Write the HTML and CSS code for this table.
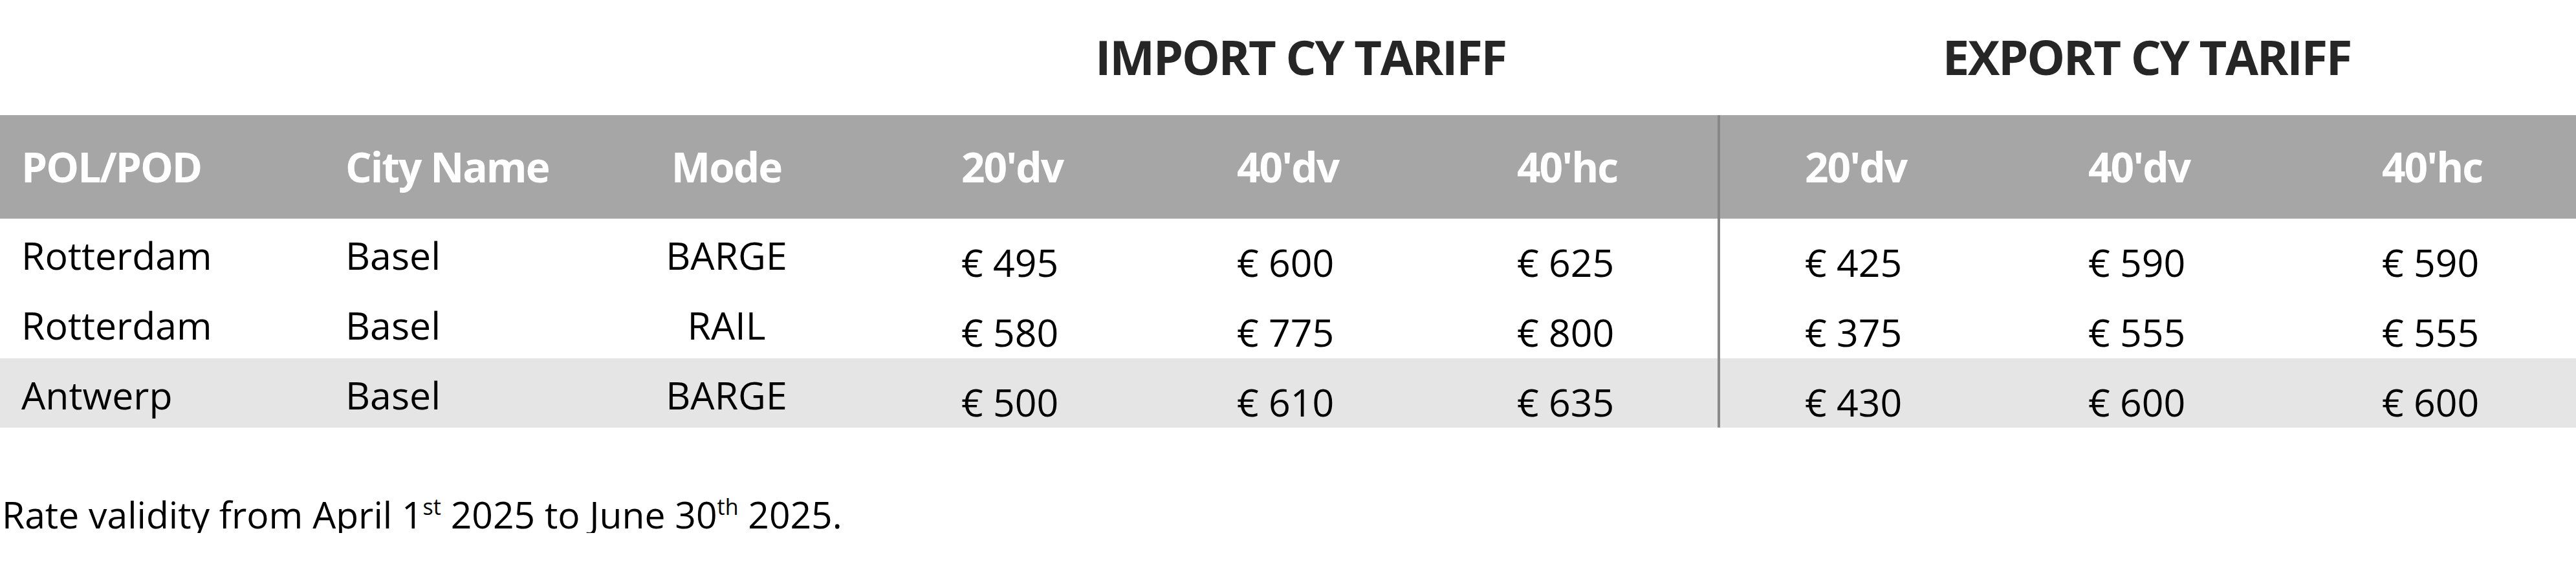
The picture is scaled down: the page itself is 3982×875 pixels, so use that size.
FILE: index.html
```html
<!DOCTYPE html>
<html lang="en">
<head>
<meta charset="utf-8">
<title>CY Tariff</title>
<link rel="stylesheet" href="styles.css">
</head>
<body>
<div class="sheet">
  <div class="grid titles">
    <div class="title import">IMPORT CY TARIFF</div>
    <div class="title export">EXPORT CY TARIFF</div>
  </div>

  <div class="grid row head">
    <div class="c c1">POL/POD</div>
    <div class="c c2">City Name</div>
    <div class="c c3">Mode</div>
    <div class="c c4">20'dv</div>
    <div class="c c5">40'dv</div>
    <div class="c c6">40'hc</div>
    <div class="c c7">20'dv</div>
    <div class="c c8">40'dv</div>
    <div class="c c9">40'hc</div>
  </div>

  <div class="grid row">
    <div class="c c1">Rotterdam</div>
    <div class="c c2">Basel</div>
    <div class="c c3">BARGE</div>
    <div class="c c4 p">€ 495</div>
    <div class="c c5 p">€ 600</div>
    <div class="c c6 p">€ 625</div>
    <div class="c c7 p">€ 425</div>
    <div class="c c8 p">€ 590</div>
    <div class="c c9 p">€ 590</div>
  </div>

  <div class="grid row">
    <div class="c c1">Rotterdam</div>
    <div class="c c2">Basel</div>
    <div class="c c3">RAIL</div>
    <div class="c c4 p">€ 580</div>
    <div class="c c5 p">€ 775</div>
    <div class="c c6 p">€ 800</div>
    <div class="c c7 p">€ 375</div>
    <div class="c c8 p">€ 555</div>
    <div class="c c9 p">€ 555</div>
  </div>

  <div class="grid row shaded">
    <div class="c c1">Antwerp</div>
    <div class="c c2">Basel</div>
    <div class="c c3">BARGE</div>
    <div class="c c4 p">€ 500</div>
    <div class="c c5 p">€ 610</div>
    <div class="c c6 p">€ 635</div>
    <div class="c c7 p">€ 430</div>
    <div class="c c8 p">€ 600</div>
    <div class="c c9 p">€ 600</div>
  </div>

  <p class="note">Rate validity from April 1<sup>st</sup> 2025 to June 30<sup>th</sup> 2025.</p>
</div>
</body>
</html>
```

FILE: styles.css
```css
html, body {
  margin: 0;
  padding: 0;
  background: #ffffff;
}

body {
  font-family: "Open Sans", "Liberation Sans", sans-serif;
  color: #000000;
  width: 3982px;
}

.sheet {
  width: 3982px;
}

.grid {
  display: grid;
  grid-template-columns: 500px 380px 486px 425px 433px 431px 440px 454px 433px;
}

/* title row */
.titles {
  height: 178px;
  align-items: start;
}

.title {
  font-weight: 700;
  font-size: 74px;
  line-height: 74px;
  letter-spacing: -2.3px;
  color: #262626;
  text-align: center;
  padding-top: 51px;
  white-space: nowrap;
}

.import { grid-column: 4 / 7; }
.export { grid-column: 7 / 10; }

/* table rows */
.row {
  height: 108px;
  font-size: 59px;
}

.c {
  white-space: nowrap;
  box-sizing: border-box;
  line-height: 80px;
  padding-top: 16px;
}

.c.p {
  padding-top: 27px;
}

.c1 { padding-left: 33px; }
.c2 { padding-left: 34px; }
.c3 { text-align: center; }
.c4 { padding-left: 120px; }
.c5 { padding-left: 121px; }
.c6 { padding-left: 121px; }
.c7 { padding-left: 131px; border-left: 4px solid #8a8a8a; }
.c8 { padding-left: 133px; }
.c9 { padding-left: 133px; }

.head {
  height: 160px;
  background: #a6a6a6;
  color: #ffffff;
  font-weight: 700;
  font-size: 64px;
  letter-spacing: -2px;
}

.head .c {
  line-height: 160px;
  padding-top: 0;
}

.head .c7 {
  border-left-color: #878787;
}

.shaded {
  background: #e5e5e5;
  height: 107px;
}

/* note */
.note {
  margin: 106px 0 0 0;
  padding-left: 3px;
  font-size: 57px;
  line-height: 57px;
  white-space: nowrap;
}

.note sup {
  font-size: 34px;
  line-height: 0;
  vertical-align: 21px;
}
```
